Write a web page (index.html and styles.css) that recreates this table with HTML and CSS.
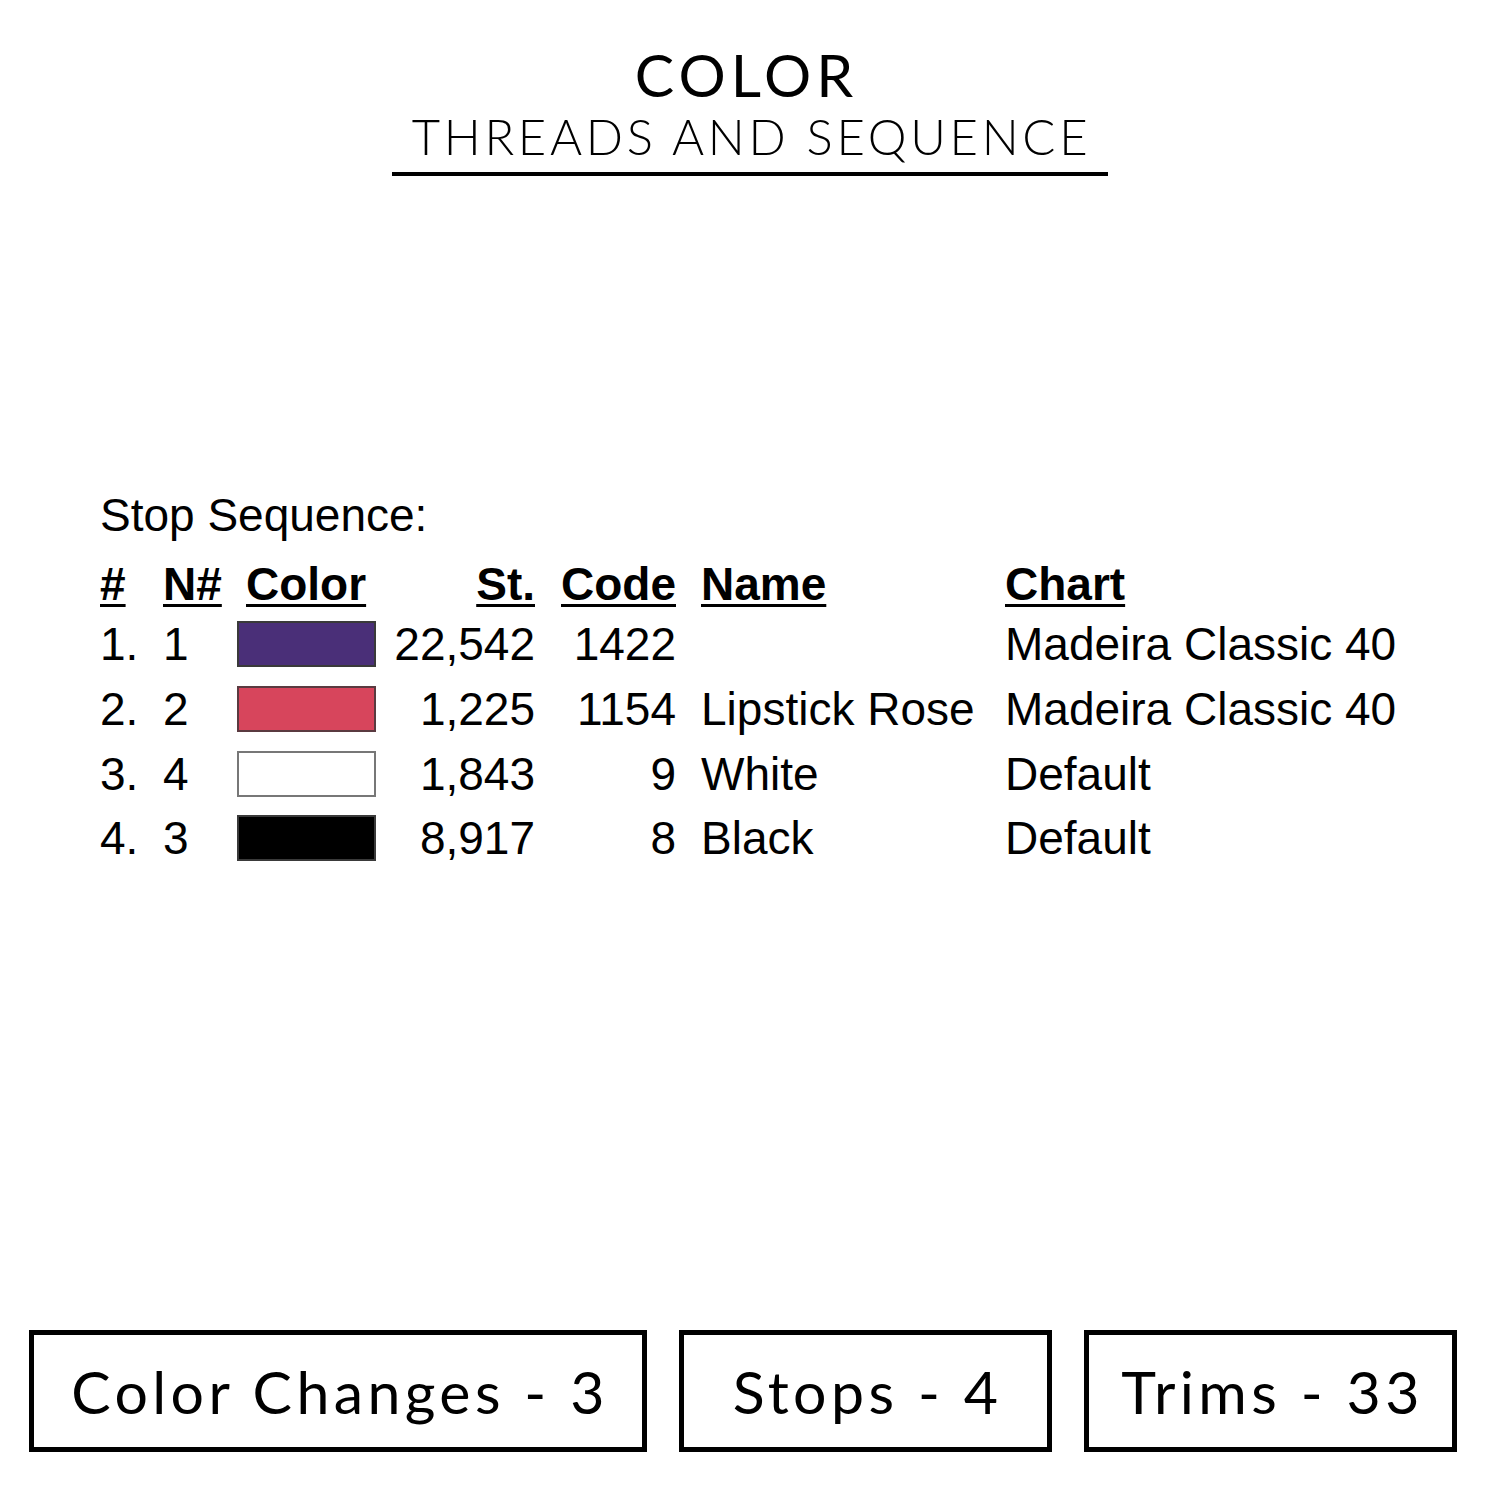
FILE: index.html
```html
<!DOCTYPE html>
<html>
<head>
<meta charset="utf-8">
<link rel="stylesheet" href="styles.css">
</head>
<body>
<div class="page">
  <header class="head">
    <h1 class="title">COLOR</h1>
    <div class="subtitle">THREADS AND SEQUENCE</div>
    <div class="rule"></div>
  </header>

  <section class="seq">
    <div class="seq-label">Stop Sequence:</div>
    <div class="table">
      <div class="th"><span class="u">#</span></div>
      <div class="th"><span class="u">N#</span></div>
      <div class="th th-color"><span class="u">Color</span></div>
      <div class="th r"><span class="u">St.</span></div>
      <div class="th r"><span class="u">Code</span></div>
      <div class="th name"><span class="u">Name</span></div>
      <div class="th"><span class="u">Chart</span></div>

      <div class="td">1.</div>
      <div class="td">1</div>
      <div class="td"><span class="sw sw-purple"></span></div>
      <div class="td r">22,542</div>
      <div class="td r">1422</div>
      <div class="td name"></div>
      <div class="td">Madeira Classic 40</div>

      <div class="td">2.</div>
      <div class="td">2</div>
      <div class="td"><span class="sw sw-red"></span></div>
      <div class="td r">1,225</div>
      <div class="td r">1154</div>
      <div class="td name">Lipstick Rose</div>
      <div class="td">Madeira Classic 40</div>

      <div class="td">3.</div>
      <div class="td">4</div>
      <div class="td"><span class="sw sw-white"></span></div>
      <div class="td r">1,843</div>
      <div class="td r">9</div>
      <div class="td name">White</div>
      <div class="td">Default</div>

      <div class="td">4.</div>
      <div class="td">3</div>
      <div class="td"><span class="sw sw-black"></span></div>
      <div class="td r">8,917</div>
      <div class="td r">8</div>
      <div class="td name">Black</div>
      <div class="td">Default</div>
    </div>
  </section>

  <footer class="stats">
    <div class="box box-wide">Color Changes - 3</div>
    <div class="box">Stops - 4</div>
    <div class="box">Trims - 33</div>
  </footer>
</div>
</body>
</html>
```

FILE: styles.css
```css
* { box-sizing: border-box; }
html, body { margin: 0; padding: 0; background: #fff; }
body { color: #000; }

.page {
  width: 1500px;
  height: 1500px;
  position: relative;
  display: flex;
  flex-direction: column;
}

.head {
  display: flex;
  flex-direction: column;
  align-items: center;
  padding-top: 39px;
}
.title {
  margin: 0 7px 0 0;
  font-family: "Lato", "DejaVu Sans", sans-serif;
  font-weight: 400;
  font-size: 59px;
  line-height: 72px;
  letter-spacing: 5px;
  height: 72px;
}
.subtitle {
  font-family: "Lato", "DejaVu Sans", sans-serif;
  font-weight: 300;
  font-size: 49px;
  line-height: 50px;
  letter-spacing: 3.7px;
  padding-left: 3px;
}
.rule {
  width: 716px;
  height: 4px;
  background: #000;
  margin-top: 11px;
}

.seq {
  margin-top: 316px;
  padding-left: 100px;
  font-family: "Liberation Sans", Arial, sans-serif;
  font-size: 46px;
}
.seq-label {
  line-height: 46px;
  height: 46px;
}
.table {
  margin-top: 18px;
  display: grid;
  grid-template-columns: 63px 74px 139px 159px 141px 329px auto;
  grid-template-rows: 56px repeat(4, 64.67px);
  align-items: center;
}
.th {
  font-weight: 700;
  line-height: 56px;
}
.th-color { padding-left: 9px; }
.u {
  text-decoration: underline;
  text-decoration-thickness: 3px;
  text-underline-offset: 4px;
}
.td {
  line-height: 64px;
  white-space: nowrap;
  display: flex;
  align-items: center;
  height: 100%;
}
.td.r, .th.r { text-align: right; justify-content: flex-end; }
.name { padding-left: 25px; }

.sw {
  display: block;
  width: 139px;
  height: 46px;
  border: 2px solid #3a3a3a;
}
.sw-purple { background: #4a2f78; }
.sw-red { background: #d7455c; border-color: #5a3a40; }
.sw-white { background: #fff; border-color: #777; }
.sw-black { background: #000; }

.stats {
  position: absolute;
  left: 29px;
  top: 1330px;
  display: flex;
  gap: 32px;
}
.box {
  width: 373px;
  height: 122px;
  border: 5px solid #000;
  display: flex;
  align-items: center;
  justify-content: center;
  font-family: "Lato", "DejaVu Sans", sans-serif;
  font-size: 59px;
  letter-spacing: 4.4px;
  padding-left: 4px;
}
.box-wide { width: 618px; }
```
